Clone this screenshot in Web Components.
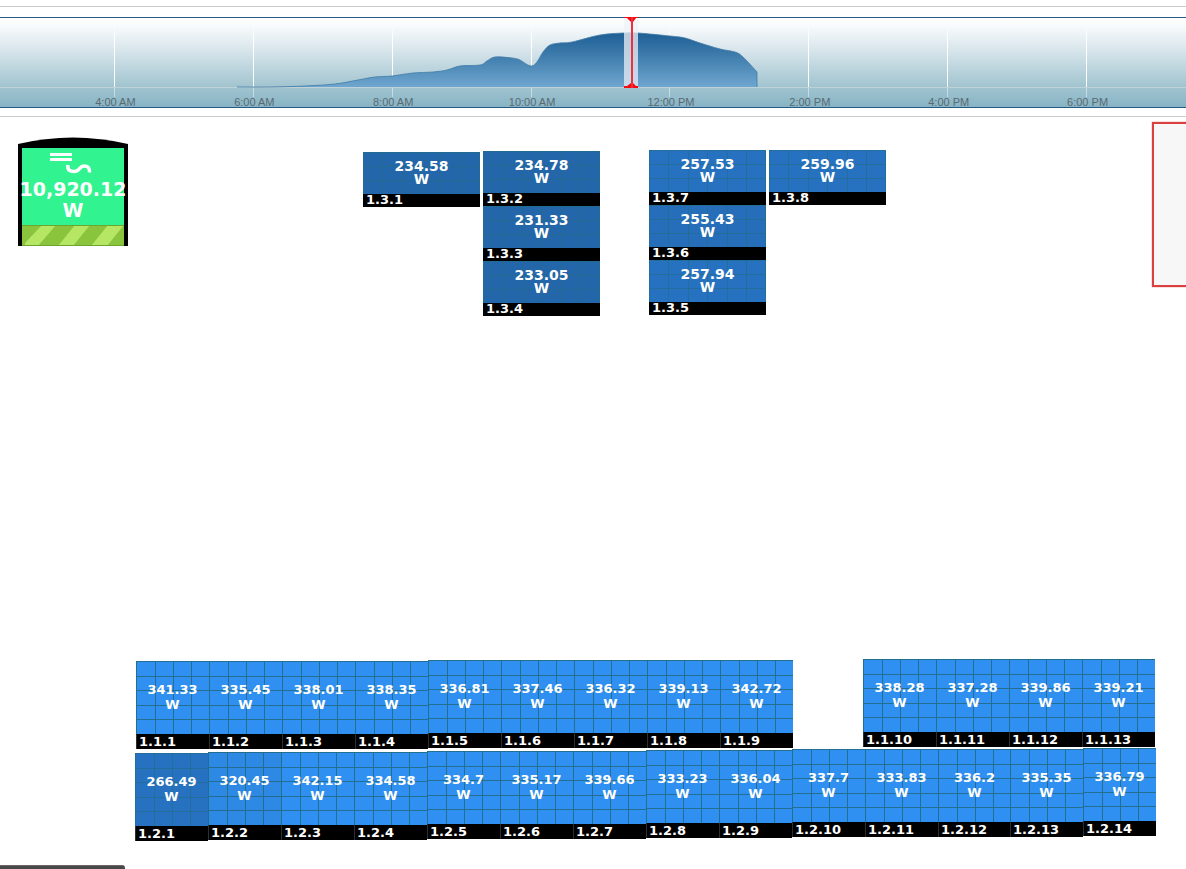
<!DOCTYPE html>
<html lang="en">
<head>
<meta charset="utf-8">
<title>Plant layout</title>
<style>
  body { margin: 0; background: #fff; font-family: "Liberation Sans", Arial, sans-serif; }
</style>
</head>
<body>
<plant-view></plant-view>

<template id="timeline-template">
  <style>
    :host { display: block; margin-top: 6px; padding: 10px 0 8px; border: solid #ccc; border-width: 1px 0; }
    .chart { position: relative; height: 89px; border: solid #265a85; border-width: 1px 0;
      background: linear-gradient(#fff 0, #f7fafb 10%, #d3e2e9 40%, #a3c5d0 76%, #87b4c5 100%); }
    svg { position: absolute; inset: 0; width: 100%; height: 70px; display: block; }
    .ticks { display: grid; grid-template-columns: repeat(8, 1fr); padding: 0 30px 0 45px; height: 89px;
      font-size: 11px; line-height: 11px; color: #5a6a72; text-align: center; }
    .tick { display: flex; flex-direction: column; align-items: center; }
    .tick::before { content: ""; width: 1px; height: 61px; margin-top: 9px;
      background: linear-gradient(rgba(255,255,255,.2), #fff 10px); }
    .tick::after { content: ""; order: 1; width: 1px; height: 9px; background: rgba(255,255,255,.45); }
    .tick span { order: 2; white-space: nowrap; padding-left: 2px; }
    .axis { position: absolute; left: 0; right: 0; top: 69px; height: 1px; background: #bfd2da; }
    .marker { position: absolute; left: 52.6%; top: -1px; width: 14px; height: 71px;
      background: linear-gradient(rgba(240,244,250,.75), rgba(230,236,245,.75)); }
    .marker svg { width: 14px; height: 71px; }
  </style>
  <div class="chart">
    <div class="ticks"></div>
    <div class="axis"></div>
    <svg viewBox="0 0 1186 70" preserveAspectRatio="none" aria-hidden="true">
      <defs><linearGradient id="fill" x1="0" y1="0" x2="0" y2="1">
        <stop offset="0" stop-color="#1d5e94"/><stop offset="1" stop-color="#6ea6cf"/>
      </linearGradient></defs>
      <path id="area" fill="url(#fill)"/>
      <path id="line" fill="none" stroke="#427ca6" stroke-opacity=".8"/>
    </svg>
    <div class="marker"><svg viewBox="0 0 14 71" aria-hidden="true">
      <path d="M0 0H14V1H12L9 5H7L3 1H0ZM0 71H14V69H12L9 66H7L3 69H0Z" fill="#f30b14"/>
      <path d="M8 0V71" stroke="#f0303a" stroke-width="2"/>
    </svg></div>
  </div>
</template>

<template id="panel-template">
  <style>
    :host { position: absolute; display: flex; flex-direction: column; box-sizing: border-box;
      width: 73px; height: 88px; color: #fff; font: bold 13px/15px "DejaVu Sans", Verdana, sans-serif; }
    .cells { flex: 1; box-sizing: border-box; display: flex; flex-direction: column; align-items: center;
      padding-top: 21px; position: relative; background: var(--tone, #3090f2); }
    .grid { position: absolute; inset: 0; width: 100%; height: 100%; }
    .grid path { fill: none; stroke: #226c85; stroke-opacity: var(--grid, .85); vector-effect: non-scaling-stroke; }
    .small { display: none; }
    .cells span { position: relative; }
    .label { background: #000; height: 15px; line-height: 15px; padding-left: 2px; border-left: 1px solid #2c2f30;
      white-space: nowrap; box-sizing: border-box; }
    :host([wide]) { width: 117px; height: 55px; font-size: 14px; line-height: 13px; }
    :host([wide]) .cells { padding-top: 8px; }
    :host([wide]) .label { height: 13px; font-size: 13px; line-height: 11px; border-color: #000; }
    :host([wide]) .large { display: none; }
    :host([wide]) .small { display: block; }
  </style>
  <div class="cells">
    <svg class="grid large" viewBox="0 0 73 73" preserveAspectRatio="none" aria-hidden="true">
      <path d="M.5 .5H73M0 15.5H73M0 29.5H73M0 44.5H73M0 58.5H73M.5 0V73M19.5 0V73M37.5 0V73M55.5 0V73"/>
    </svg>
    <svg class="grid small" viewBox="0 0 117 42" preserveAspectRatio="none" aria-hidden="true">
      <path d="M.5 41.5V.5H116.5V41.5M0 14.5H117M0 28.5H117M19.5 0V42M39.5 0V42M58.5 0V42M78.5 0V42M97.5 0V42"/>
    </svg>
    <span><slot name="power"></slot></span><span>W</span>
  </div>
  <div class="label"><slot></slot></div>
</template>

<template id="inverter-template">
  <style>
    :host { position: absolute; width: 110px; height: 109px; color: #fff;
      font: bold 19px/21px "DejaVu Sans", Verdana, sans-serif; }
    svg { position: absolute; inset: 0; }
    .reading { position: relative; display: flex; flex-direction: column; align-items: center; padding-top: 42px; }
  </style>
  <svg width="110" height="109" viewBox="0 0 110 109" aria-hidden="true">
    <path d="M0 109V7Q55 -6 110 7V109Z" fill="#000"/>
    <path d="M4 11H106V88H4Z" fill="#31f38f"/>
    <path d="M4 88H106V109H4Z" fill="#8ac43c"/>
    <path d="M24 88H38L20 109H7V106ZM57 88H72L55 109H40ZM90 88H106L89 109H73Z" fill="#b5e664"/>
    <path d="M4 88.5H106M4 108.5H106" stroke="#6ca62c"/>
    <path d="M32 17.500H54M32 22.500H54" stroke="#fff" stroke-width="3"/>
    <path d="M50 28C49 33 52 34.500 56 34.500C62 34.500 61 29 66 29C70 29 72 31 71.500 35.500" fill="none" stroke="#fff" stroke-width="3.500"/>
  </svg>
  <div class="reading"><span><slot></slot></span><span>W</span></div>
</template>

<template id="plant-template">
  <style>
    :host { display: flex; flex-direction: column; min-height: 100vh; box-sizing: border-box; overflow: hidden; }
    .canvas { position: relative; flex: 1; min-height: 740px; }
    .zone { position: absolute; left: 1152px; top: 5px; width: 160px; height: 161px;
      border: 2px solid #d9403f; background: #f7f7f7; box-shadow: 0 0 1px #d9403f; }
    .status { position: fixed; left: 0; bottom: 0; width: 125px; height: 4px; box-sizing: border-box;
      background: #484848; border-top: 1px solid #666; border-top-right-radius: 3px; }
  </style>
  <power-timeline></power-timeline>
  <div class="canvas">
    <plant-inverter style="left:18px;top:20px">10,920.12</plant-inverter>
    <div class="zone"></div>
  </div>
  <div class="status"></div>
</template>

<script>
  const stamp = (host, id) => {
    const root = host.attachShadow({ mode: "open" });
    root.append(document.getElementById(id).content.cloneNode(true));
    return root;
  };

  // Output curve: x along the day, y down from the top of the plot.
  const curve = [[237,69],[270,69],[305,68],[335,66],[358,62],[375,59],[392,58],[413,55],[433,54],[447,52],
    [460,48],[480,47],[487,43],[495,39],[512,40],[520,42],[526,46],[532,48],[537,44],[543,34],[550,27],[560,25],
    [572,24],[600,17],[624,15],[638,15],[670,18],[685,20],[700,25],[720,31],[735,34],
    [743,39],[757,54]];

  function smooth(points) {
    let d = `M${points[0]}`;
    for (let i = 0; i < points.length - 1; i++) {
      const a = points[i - 1] || points[i], b = points[i], c = points[i + 1], e = points[i + 2] || c;
      d += `C${b[0] + (c[0] - a[0]) / 6} ${b[1] + (c[1] - a[1]) / 6} ${c[0] - (e[0] - b[0]) / 6} ${c[1] - (e[1] - b[1]) / 6} ${c}`;
    }
    return d;
  }

  customElements.define("power-timeline", class extends HTMLElement {
    constructor() {
      super();
      const root = stamp(this, "timeline-template");
      const hours = ["4:00 AM", "6:00 AM", "8:00 AM", "10:00 AM", "12:00 PM", "2:00 PM", "4:00 PM", "6:00 PM"];
      root.querySelector(".ticks").innerHTML = hours.map(h => `<div class="tick"><span>${h}</span></div>`).join("");
      const d = smooth(curve);
      root.getElementById("area").setAttribute("d", d + "V69H237Z");
      root.getElementById("line").setAttribute("d", d + "V69");
    }
  });

  customElements.define("solar-panel", class extends HTMLElement {
    constructor() { super(); stamp(this, "panel-template"); }
  });

  customElements.define("plant-inverter", class extends HTMLElement {
    constructor() { super(); stamp(this, "inverter-template"); }
  });

  // Roof positions on the plant canvas: id, watts, x, y.
  const wide = [
    ["1.3.1","234.58",363,35],["1.3.2","234.78",483,34],["1.3.3","231.33",483,89],["1.3.4","233.05",483,144],
    ["1.3.7","257.53",649,33],["1.3.6","255.43",649,88],["1.3.5","257.94",649,143],["1.3.8","259.96",769,33]
  ];
  const tall = [
    ["1.1.1","341.33",136,544],["1.1.2","335.45",209,544],["1.1.3","338.01",282,544],["1.1.4","338.35",355,544],
    ["1.1.5","336.81",428,543],["1.1.6","337.46",501,543],["1.1.7","336.32",574,543],["1.1.8","339.13",647,543],
    ["1.1.9","342.72",720,543],["1.1.10","338.28",863,542],["1.1.11","337.28",936,542],["1.1.12","339.86",1009,542],
    ["1.1.13","339.21",1082,542],
    ["1.2.1","266.49",135,636],["1.2.2","320.45",208,635],["1.2.3","342.15",281,635],["1.2.4","334.58",354,635],
    ["1.2.5","334.7",427,634],["1.2.6","335.17",500,634],["1.2.7","339.66",573,634],["1.2.8","333.23",646,633],
    ["1.2.9","336.04",719,633],["1.2.10","337.7",792,632],["1.2.11","333.83",865,632],["1.2.12","336.2",938,632],
    ["1.2.13","335.35",1010,632],["1.2.14","336.79",1083,631]
  ];
  const tone = w => w < 240 ? "#2366a9" : w < 257 ? "#266eb9" : w < 300 ? "#2672c0" : w < 330 ? "#2e89e5" : "#3090f2";

  customElements.define("plant-view", class extends HTMLElement {
    constructor() {
      super();
      const root = stamp(this, "plant-template");
      const panel = (p, size) => `<solar-panel ${size} style="left:${p[2]}px;top:${p[3]}px;--tone:${tone(+p[1])};--grid:${+p[1] < 300 ? .6 : .9}"><span slot="power">${p[1]}</span>${p[0]}</solar-panel>`;
      root.querySelector(".canvas").insertAdjacentHTML("beforeend",
        wide.map(p => panel(p, "wide")).join("") + tall.map(p => panel(p, "")).join(""));
    }
  });
</script>
</body>
</html>
